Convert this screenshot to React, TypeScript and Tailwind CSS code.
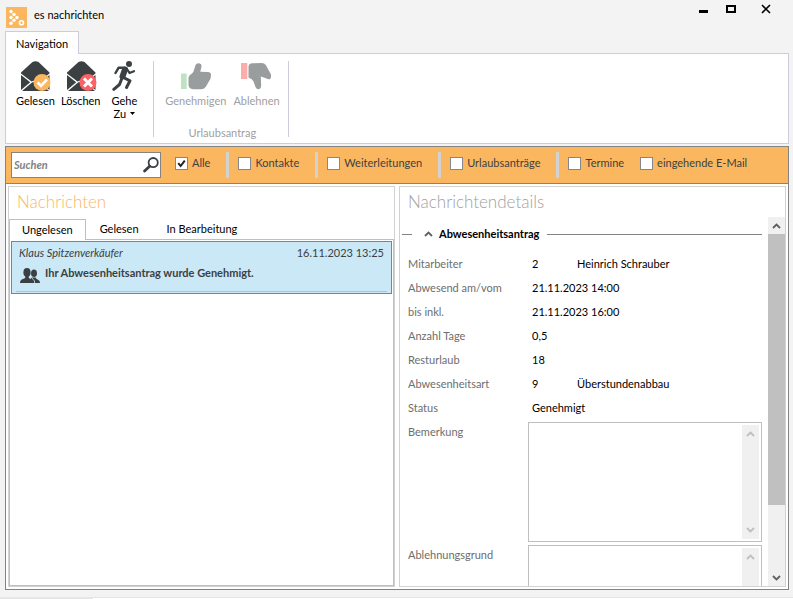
import { useState } from "react";
import type { ReactNode } from "react";
import { clsx } from "clsx";

const FILTERS = [
  ["Alle"],
  ["Kontakte"],
  ["Weiterleitungen"],
  ["Urlaubsanträge"],
  ["Termine", "eingehende E-Mail"],
];

const TABS = ["Ungelesen", "Gelesen", "In Bearbeitung"];

const DETAILS = [
  { label: "Mitarbeiter", value: "2", text: "Heinrich Schrauber" },
  { label: "Abwesend am/vom", value: "21.11.2023 14:00" },
  { label: "bis inkl.", value: "21.11.2023 16:00" },
  { label: "Anzahl Tage", value: "0,5" },
  { label: "Resturlaub", value: "18" },
  { label: "Abwesenheitsart", value: "9", text: "Überstundenabbau" },
  { label: "Status", value: "Genehmigt" },
];

function LogoIcon() {
  return (
    <svg width="21" height="21" viewBox="0 0 21 21" aria-hidden="true">
      <rect width="21" height="21" fill="#fbb75f" />
      <g fill="#fff">
        <circle cx="5" cy="4.5" r="1.7" />
        <circle cx="8" cy="7.5" r="1.7" />
        <circle cx="5" cy="10.5" r="1.7" />
        <circle cx="11" cy="10.5" r="1.7" />
        <circle cx="8" cy="13.3" r="1.7" />
        <circle cx="5" cy="16.3" r="1.7" />
      </g>
      <circle cx="15.5" cy="15.8" r="2" fill="none" stroke="#fff" strokeWidth="1.6" />
    </svg>
  );
}

function Envelope({ children }: { children: ReactNode }) {
  return (
    <svg width="32" height="30" viewBox="-2 0 32 30" aria-hidden="true">
      <g fill="#3b4142">
        <path d="M0 11.5 L11.5 1 Q14.5 -0.5 17.5 1 L28.5 11.5 V12.5 L18.5 20.5 L14.5 19 L10.5 20.5 L0 12.5 Z" />
        <path d="M0 14 L9.2 21.2 L0 29 Z" />
        <path d="M1 30 L11 21.5 L14.5 20.2 L18 21.5 L28 30 Z" />
        <path d="M28.5 14 L19.5 21.2 L28.5 29 Z" />
      </g>
      {children}
    </svg>
  );
}

function ReadIcon() {
  return (
    <Envelope>
      <circle cx="21" cy="21.5" r="8.5" fill="#fbb75f" />
      <path d="M16.5 21.5 L20 24.8 L26 18.5" fill="none" stroke="#fff" strokeWidth="2.6" />
    </Envelope>
  );
}

function DeleteIcon() {
  return (
    <Envelope>
      <circle cx="21" cy="21.5" r="8.5" fill="#fb6266" />
      <path d="M17 17.5 L25 25.5 M25 17.5 L17 25.5" fill="none" stroke="#fff" strokeWidth="3" />
    </Envelope>
  );
}

function RunnerIcon() {
  return (
    <svg width="24" height="30" viewBox="0 0 24 30" aria-hidden="true">
      <circle cx="17" cy="3" r="3" fill="#3b4142" />
      <g fill="none" stroke="#3b4142" strokeLinecap="round" strokeLinejoin="round">
        <path d="M13 8.5 L10.5 15.5" strokeWidth="6" />
        <path d="M12.5 6.8 L6.5 6.8 L3.5 12" strokeWidth="2.4" />
        <path d="M15 8 L17.5 12 L22 10.2" strokeWidth="2.2" />
        <path d="M10 17 L7.5 23.5 L1.8 28.3" strokeWidth="3" />
        <path d="M11.5 16.5 L18 19.8 L14.5 26.5" strokeWidth="3" />
      </g>
    </svg>
  );
}

function ThumbUpIcon() {
  return (
    <svg width="30" height="30" viewBox="0 0 30 30" aria-hidden="true">
      <rect x="0" y="12.5" width="5.7" height="15.5" fill="#bfe3c2" />
      <path
        d="M7.5 16.5 Q8 14 11 12.5 Q12.5 11.5 13 9 L14.5 4 Q15.5 2 18 2.2 Q20.8 2.8 20.5 5.5 L19.3 10.8 L27 11 Q30 11.5 30 13.5 L29.6 17.5 L25 25.5 Q23.5 28 20.5 28.2 L12 28.2 Q8 27.5 7.5 24.5 Z"
        fill="#9a9d9d"
      />
    </svg>
  );
}

function ThumbDownIcon() {
  return (
    <svg width="30" height="30" viewBox="0 0 30 30" aria-hidden="true">
      <rect x="0" y="2" width="6.3" height="16" fill="#fdacac" />
      <path
        d="M7.5 5 Q8 2.6 11 2.3 L20.5 2 Q23.5 2 24.8 4 L30 13.5 Q30.5 16.5 29 18 Q27.5 18.6 25 17.3 L19.8 15.5 L20.2 24.5 Q20.2 27.5 18 28.2 Q15.4 28.4 14.5 26 L12.5 20.5 Q11.5 17.8 7.5 16.5 Z"
        fill="#9a9d9d"
      />
    </svg>
  );
}

function UsersIcon() {
  return (
    <svg width="20" height="16" viewBox="0 0 20 16" aria-hidden="true">
      <g fill="#3b4142">
        <ellipse cx="14" cy="5.2" rx="3" ry="3.8" />
        <path d="M11 15 V9.5 H15.8 L16.5 11 Q20 12 20 15 Z" />
        <ellipse cx="7" cy="4.5" rx="3.6" ry="4.4" />
        <path d="M0 15 Q0 11.8 3 11 L5.2 10 V7 H8.8 V10 L11 11 Q14 11.8 14 15 Z" />
      </g>
      <path d="M10.6 8.5 L14.5 13 V15" fill="none" stroke="#cbe8f5" strokeWidth="0.8" />
    </svg>
  );
}

function SearchIcon() {
  return (
    <svg width="16" height="16" viewBox="0 0 16 16" aria-hidden="true">
      <circle cx="10.2" cy="5.6" r="4.6" fill="none" stroke="#3b4142" strokeWidth="1.8" />
      <path d="M6.6 9.2 L1.6 14" stroke="#3b4142" strokeWidth="2.8" strokeLinecap="round" />
    </svg>
  );
}

function Chevron({ down = false }: { down?: boolean }) {
  return (
    <svg width="9" height="6" viewBox="0 0 9 6" fill="none" stroke="currentColor" strokeWidth="1.8" aria-hidden="true">
      <path d={down ? "M1 1 L4.5 4.5 L8 1" : "M1 5 L4.5 1.5 L8 5"} />
    </svg>
  );
}

function RibbonButton({ icon, children, disabled }: { icon: ReactNode; children: ReactNode; disabled?: boolean }) {
  return (
    <button type="button" disabled={disabled} className="flex flex-col items-center gap-[3px] disabled:text-[#a0a0a0]">
      {icon}
      <span className="leading-[13px]">{children}</span>
    </button>
  );
}

function FilterCheck({ label, defaultChecked }: { label: string; defaultChecked?: boolean }) {
  return (
    <label className="flex items-center gap-1 whitespace-nowrap">
      <span className="relative flex">
        <input
          type="checkbox"
          defaultChecked={defaultChecked}
          className="peer size-[13px] appearance-none border border-[#828790] bg-white"
        />
        <svg
          className="pointer-events-none absolute inset-0 hidden peer-checked:block"
          width="13"
          height="13"
          viewBox="0 0 13 13"
          aria-hidden="true"
        >
          <path d="M3.2 6.2 L5.6 9 L9.8 3.6" fill="none" stroke="#212121" strokeWidth="2" />
        </svg>
      </span>
      {label}
    </label>
  );
}

function NoteField({ id, label }: { id: string; label: string }) {
  return (
    <div className="flex">
      <label htmlFor={id} className="w-[120px] shrink-0 pt-[3px] leading-[14px] text-[#6d6d6d]">
        {label}
      </label>
      <div className="flex h-[120px] flex-1 border border-[#bfbfbf] p-0.5">
        <textarea id={id} className="min-w-0 flex-1 resize-none outline-none" />
        <div className="flex w-[17px] flex-col items-center justify-between bg-[#f0f0f0] py-1.5 text-[#bfbfbf]">
          <Chevron />
          <Chevron down />
        </div>
      </div>
    </div>
  );
}

function MessagePanel() {
  const [tab, setTab] = useState(TABS[0]);

  return (
    <section className="flex min-h-0 flex-1 flex-col border border-[#d2d2d2]">
      <h2 className="px-2 pt-1 pb-0.5 text-[17px] leading-[22px] font-light text-[#fbb75f]">Nachrichten</h2>
      <div role="tablist" className="mt-1 flex h-[21px] items-stretch">
        {TABS.map((t) => (
          <button
            key={t}
            type="button"
            role="tab"
            aria-selected={t === tab}
            onClick={() => setTab(t)}
            className={clsx(
              "border-[#bfbfbf]",
              t === tab ? "border border-b-0 px-3" : "border-b px-3.5",
            )}
          >
            {t}
          </button>
        ))}
        <div className="flex-1 border-b border-[#bfbfbf]" />
      </div>
      <div className="flex-1 border border-t-0 border-[#bfbfbf] px-px pt-px">
        <article className="border border-[#26a0da] bg-[#cbe8f6] px-1 pb-px text-[#3b4142]">
          <div className="flex justify-between px-[3px] pt-[3px] leading-4">
            <span className="italic">Klaus Spitzenverkäufer</span>
            <time>16.11.2023 13:25</time>
          </div>
          <div className="flex h-[31px] items-center gap-[5px] border-b border-[#bfbfbf] px-1">
            <UsersIcon />
            <strong className="pb-1.5">Ihr Abwesenheitsantrag wurde Genehmigt.</strong>
          </div>
        </article>
      </div>
    </section>
  );
}

function DetailPanel() {
  return (
    <section className="flex min-h-0 flex-1 flex-col border border-[#d2d2d2]">
      <h2 className="px-2 pt-1 pb-0.5 text-[17px] leading-[22px] font-light text-[#a0a0a0]">Nachrichtendetails</h2>
      <div className="mt-0.5 flex min-h-0 flex-1">
        <div className="min-w-0 flex-1 overflow-hidden pr-1.5">
          <div className="flex h-[34px] items-center gap-2 pl-0.5">
            <span className="h-px w-2.5 bg-[#838383]" />
            <button type="button" className="flex items-center gap-1.5 pl-1 font-bold">
              <span className="text-[#606060]">
                <Chevron />
              </span>
              Abwesenheitsantrag
            </button>
            <span className="h-px flex-1 bg-[#838383]" />
          </div>
          <dl className="pt-px pl-2">
            {DETAILS.map((d) => (
              <div key={d.label} className="flex h-6 items-center">
                <dt className="w-[124px] text-[#6d6d6d]">{d.label}</dt>
                <dd className={clsx(d.text && "w-[45px]")}>{d.value}</dd>
                {d.text && <dd>{d.text}</dd>}
              </div>
            ))}
          </dl>
          <div className="flex flex-col gap-[3px] pt-0.5 pl-2">
            <NoteField id="bemerkung" label="Bemerkung" />
            <NoteField id="ablehnungsgrund" label="Ablehnungsgrund" />
          </div>
        </div>
        <div className="flex w-[17px] flex-col bg-[#f0f0f0] text-[#606060]">
          <div className="flex h-[17px] items-center justify-center">
            <Chevron />
          </div>
          <div className="flex-1">
            <div className="h-[81%] bg-[#c0c0c0]" />
          </div>
          <div className="flex h-[17px] items-center justify-center">
            <Chevron down />
          </div>
        </div>
      </div>
    </section>
  );
}

export default function App() {
  return (
    <div className="flex h-screen flex-col overflow-hidden bg-[#f3f3f3] font-['Lato',sans-serif] text-[11px] text-black">
      <header className="flex h-[31px] items-start justify-between pl-1.5">
        <div className="flex items-center gap-[7px] pt-[7px]">
          <LogoIcon />
          <h1 className="pb-1">es nachrichten</h1>
        </div>
        <div className="flex gap-4 pt-1 pr-5">
          <button type="button" aria-label="Minimieren">
            <svg width="12" height="12" viewBox="0 0 12 12">
              <rect x="2" y="6" width="9" height="3" />
            </svg>
          </button>
          <button type="button" aria-label="Maximieren">
            <svg width="12" height="12" viewBox="0 0 12 12">
              <path d="M1 1 H11 V9 H1 Z M3 3 V7 H9 V3 Z" fillRule="evenodd" />
            </svg>
          </button>
          <button type="button" aria-label="Schließen" className="ml-2">
            <svg width="12" height="12" viewBox="0 0 12 12">
              <path d="M1 1 L9 9 M9 1 L1 9" fill="none" stroke="#000" strokeWidth="1.6" />
            </svg>
          </button>
        </div>
      </header>

      <nav className="pr-1 pl-[5px]">
        <button
          type="button"
          className="relative z-10 -mb-px block h-[23px] border border-b-0 border-[#ccccdc] bg-white px-2.5 pt-0.5"
        >
          Navigation
        </button>
        <div className="flex h-[91px] border border-[#ccccdc] bg-white pt-[7px] pb-1.5">
          <div className="flex items-start gap-1.5 border-r border-[#ccccdc] pr-4 pl-2.5">
            <RibbonButton icon={<ReadIcon />}>Gelesen</RibbonButton>
            <RibbonButton icon={<DeleteIcon />}>Löschen</RibbonButton>
            <div className="pl-[5px]">
              <RibbonButton icon={<RunnerIcon />}>
                Gehe
                <span className="flex items-center justify-center gap-1">
                  Zu
                  <svg width="5" height="3" viewBox="0 0 5 3" aria-hidden="true">
                    <path d="M0 0 H5 L2.5 3 Z" />
                  </svg>
                </span>
              </RibbonButton>
            </div>
          </div>
          <div className="flex flex-col items-center justify-between border-r border-[#ccccdc] pr-2 pl-[11px] text-[#a0a0a0]">
            <div className="flex gap-[7px]">
              <RibbonButton icon={<ThumbUpIcon />} disabled>
                Genehmigen
              </RibbonButton>
              <RibbonButton icon={<ThumbDownIcon />} disabled>
                Ablehnen
              </RibbonButton>
            </div>
            <span className="-mb-1 leading-4">Urlaubsantrag</span>
          </div>
        </div>
      </nav>

      <main className="mt-0.5 mr-1 mb-[7px] ml-[5px] flex min-h-0 flex-1 flex-col border border-[#838383] bg-white">
        <div className="flex h-[37px] items-center border-b border-[#838383] bg-[#fbb75f] pl-[5px] text-[#3b4142]">
          <div className="mr-[14px] flex h-[26px] w-[150px] items-center border border-[#838383] bg-white pr-px pl-0.5">
            <input
              type="search"
              aria-label="Suchen"
              placeholder="Suchen"
              className="min-w-0 flex-1 font-bold italic outline-none placeholder:text-[#838383]"
            />
            <button type="button" aria-label="Suche starten">
              <SearchIcon />
            </button>
          </div>
          {FILTERS.map((group, i) => (
            <div
              key={group[0]}
              className={clsx(
                "flex h-[26px] items-start gap-4 pt-[3px]",
                i > 0 && "ml-4 border-l-3 border-[#d2d2d2] pl-[9px]",
              )}
            >
              {group.map((label) => (
                <FilterCheck key={label} label={label} defaultChecked={label === "Alle"} />
              ))}
            </div>
          ))}
        </div>
        <div className="flex min-h-0 flex-1 gap-1 p-0.5">
          <MessagePanel />
          <DetailPanel />
        </div>
      </main>

      <footer className="flex h-0.5 border-t border-[#e5e5e5] bg-white">
        <div className="w-[93px] bg-[#e5e5e5]" />
      </footer>
    </div>
  );
}
